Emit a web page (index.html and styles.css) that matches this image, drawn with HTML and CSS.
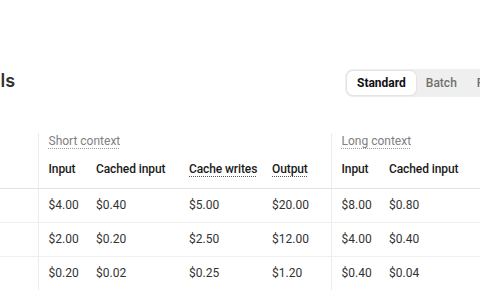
FILE: index.html
```html
<!DOCTYPE html>
<html>
<head>
<meta charset="utf-8">
<link rel="stylesheet" href="styles.css">
</head>
<body>
<div class="page">
  <div class="header">
    <div class="title-wrap"><h2 class="title">Models</h2></div>
    <div class="seg">
      <span class="seg-item active">Standard</span>
      <span class="seg-item">Batch</span>
      <span class="seg-item">Flex</span>
      <span class="seg-item">Priority</span>
    </div>
  </div>
  <table class="pricing">
    <colgroup>
      <col class="c-model">
      <col class="c-in"><col class="c-cached"><col class="c-writes"><col class="c-out">
      <col class="c-in"><col class="c-cached"><col class="c-writes"><col class="c-out">
    </colgroup>
    <thead>
      <tr class="group-row">
        <th></th>
        <th colspan="4" class="grp"><span class="dotted">Short context</span></th>
        <th colspan="4" class="grp"><span class="dotted">Long context</span></th>
      </tr>
      <tr class="head-row">
        <th></th>
        <th class="gs">Input</th>
        <th>Cached input</th>
        <th><span class="dotted dark">Cache writes</span></th>
        <th><span class="dotted dark">Output</span></th>
        <th class="gs">Input</th>
        <th>Cached input</th>
        <th><span class="dotted dark">Cache writes</span></th>
        <th><span class="dotted dark">Output</span></th>
      </tr>
    </thead>
    <tbody>
      <tr>
        <td></td>
        <td class="gs">$4.00</td><td>$0.40</td><td>$5.00</td><td>$20.00</td>
        <td class="gs">$8.00</td><td>$0.80</td><td>$10.00</td><td>$30.00</td>
      </tr>
      <tr>
        <td></td>
        <td class="gs">$2.00</td><td>$0.20</td><td>$2.50</td><td>$12.00</td>
        <td class="gs">$4.00</td><td>$0.40</td><td>$5.00</td><td>$18.00</td>
      </tr>
      <tr>
        <td></td>
        <td class="gs">$0.20</td><td>$0.02</td><td>$0.25</td><td>$1.20</td>
        <td class="gs">$0.40</td><td>$0.04</td><td>$0.50</td><td>$1.80</td>
      </tr>
    </tbody>
  </table>
</div>
</body>
</html>
```

FILE: styles.css
```css
html, body {
  margin: 0;
  padding: 0;
  background: #ffffff;
  overflow: hidden;
}
body {
  font-family: Roboto, "Noto Sans", sans-serif;
  color: #222;
  width: 480px;
  height: 300px;
}
.page {
  padding-top: 68px;
}
.header {
  display: flex;
  align-items: center;
  height: 30px;
}
.title-wrap {
  width: 345px;
  flex: none;
}
.title {
  margin: 0 0 4px -49px;
  font-family: Inter, Roboto, sans-serif;
  font-size: 18px;
  font-weight: 600;
  color: #333;
  line-height: 22px;
}
.seg {
  flex: none;
  display: flex;
  align-items: center;
  background: #efefef;
  border-radius: 8px;
  padding: 2px;
  height: 24px;
  white-space: nowrap;
}
.seg-item {
  font-size: 12px;
  font-weight: 500;
  color: #707070;
  padding: 0 10px;
  line-height: 24px;
  border-radius: 6px;
}
.seg-item.active {
  background: #fff;
  color: #111;
  font-weight: 700;
  padding: 0 10px;
  box-shadow: 0 0 0 1px #e4e4e4, 0 1px 2px rgba(0,0,0,0.06);
}
.pricing {
  margin-top: 35px;
  border-collapse: collapse;
  table-layout: fixed;
  width: 624px;
}
.c-model { width: 38px; }
.c-in { width: 48px; }
.c-cached { width: 93px; }
.c-writes { width: 83px; }
.c-out { width: 69px; }
.pricing th, .pricing td {
  padding: 0 0 0 10px;
  text-align: left;
  white-space: nowrap;
  line-height: 16px;
}
.pricing th:first-child, .pricing td:first-child {
  padding: 0;
}
.group-row th {
  height: 22px;
  font-size: 12px;
  font-weight: 400;
  color: #808080;
  vertical-align: top;
}
.group-row th.grp {
  border-left: 1px solid #ececec;
}
.head-row th {
  height: 33px;
  box-sizing: border-box;
  padding-top: 6px;
  vertical-align: top;
  font-size: 12px;
  font-weight: 500;
  letter-spacing: -0.1px;
  color: #1a1a1a;
  border-bottom: 1px solid #e2e2ea;
}
.pricing .gs {
  border-left: 1px solid #ececec;
}
.pricing td {
  height: 33px;
  font-size: 12px;
  color: #333;
  border-bottom: 1px solid #efefef;
}
.pricing tbody tr:last-child td {
  border-bottom: none;
}
.dotted {
  text-decoration: underline dotted #9a9a9a;
  text-underline-offset: 3px;
  text-decoration-thickness: 1px;
}
.dotted.dark {
  text-decoration-color: #555;
}
```
